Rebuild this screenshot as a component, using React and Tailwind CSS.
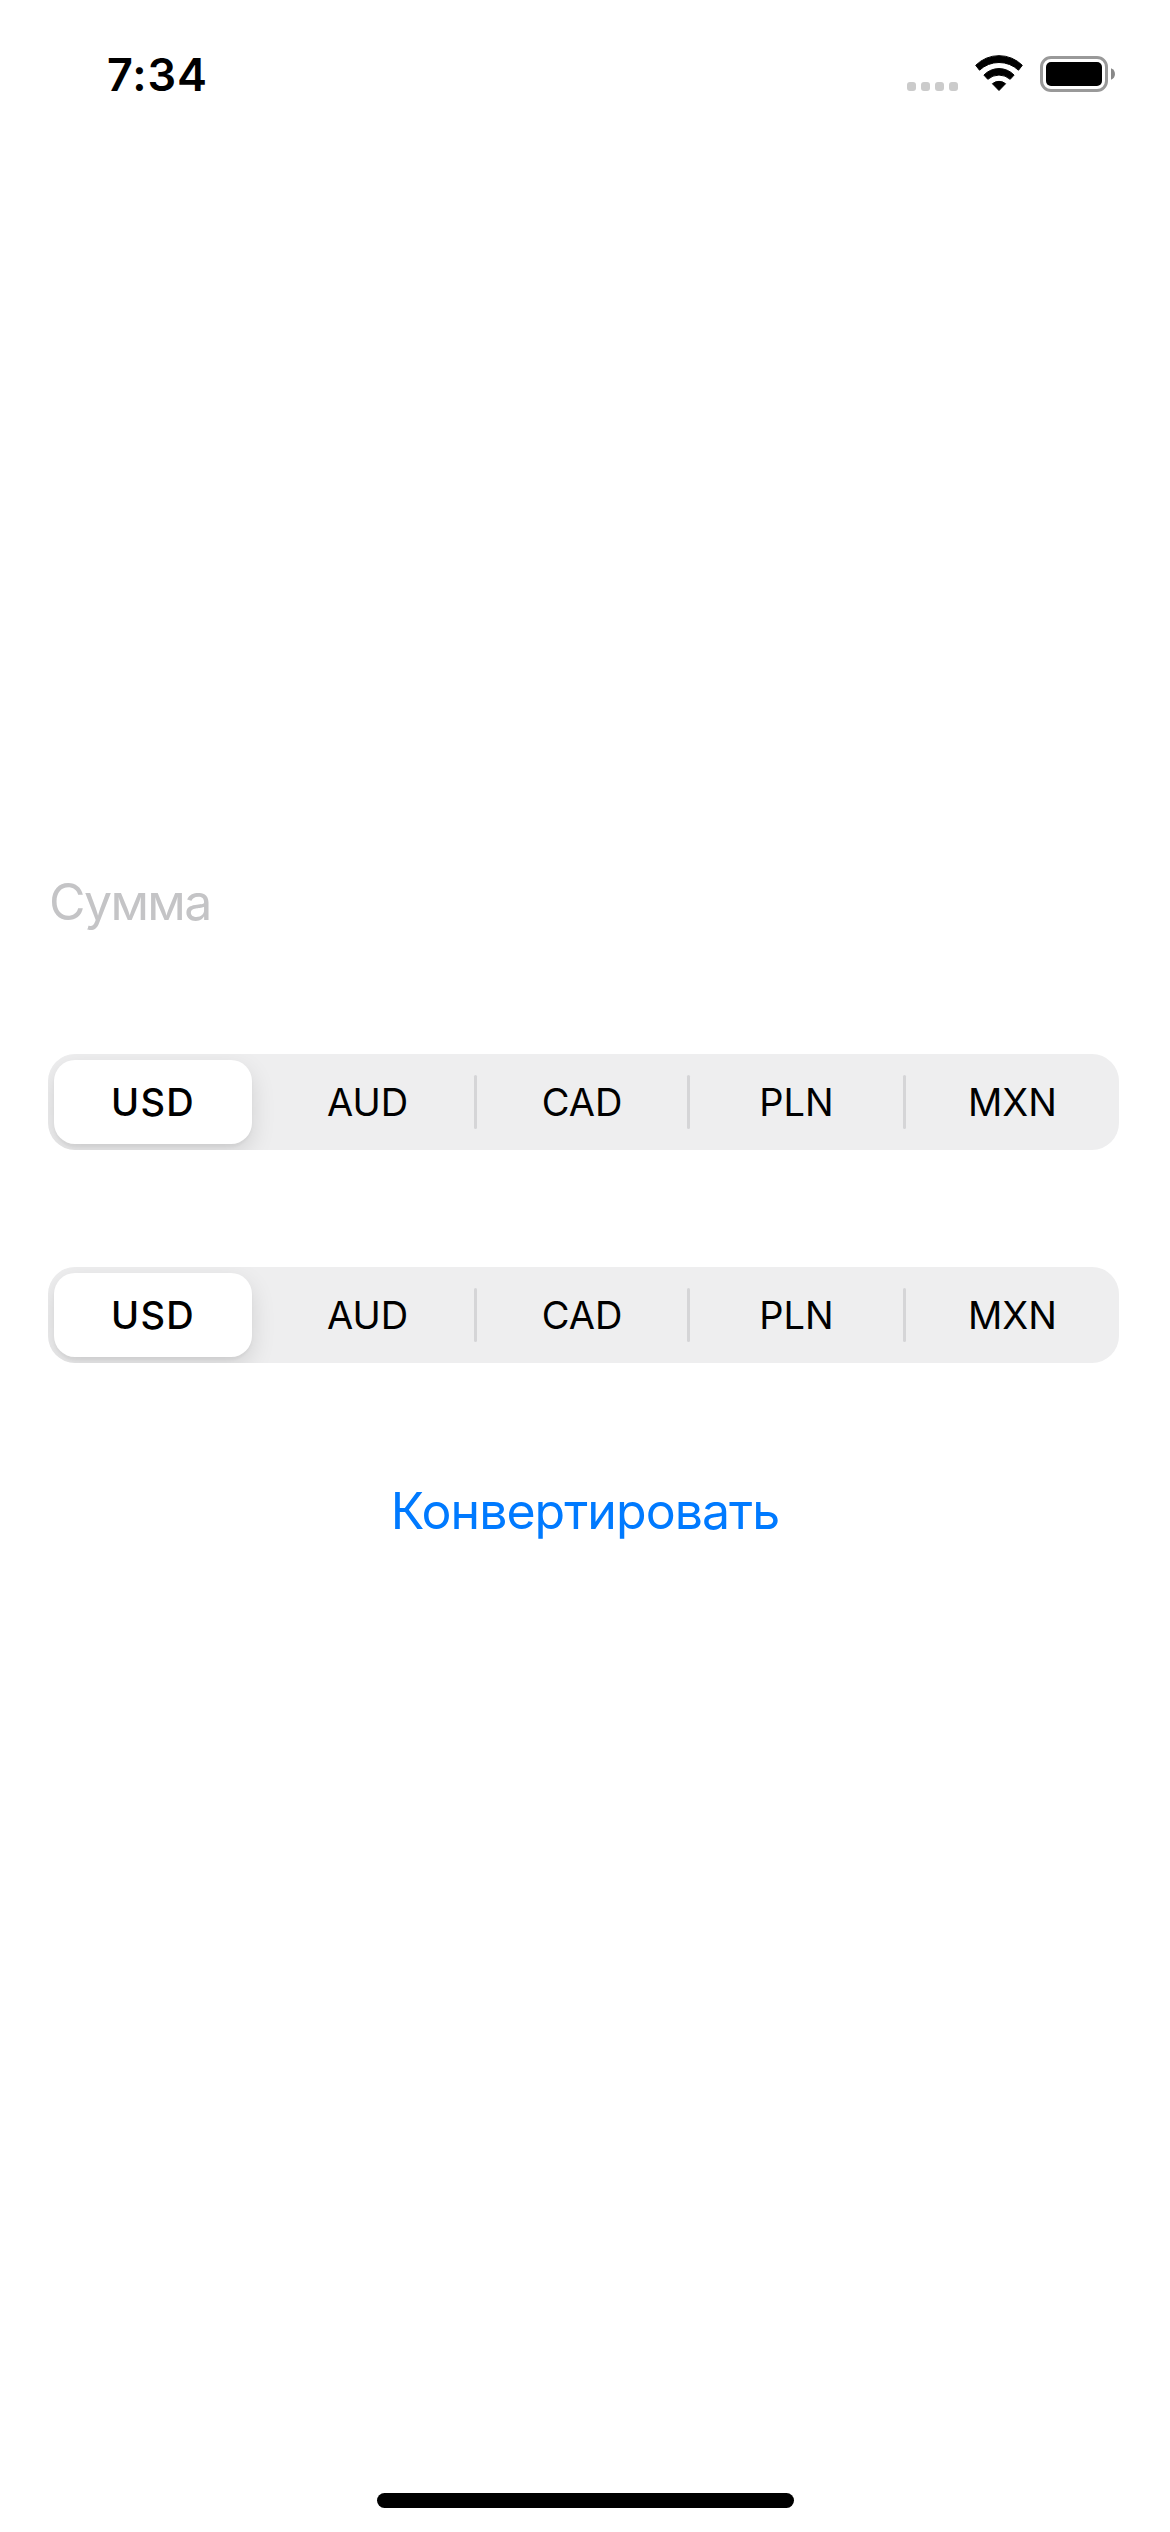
const currencies = ["USD", "AUD", "CAD", "PLN", "MXN"];

function SegmentedControl({ className }) {
  return (
    <div
      role="tablist"
      className={`grid h-24 w-[1071px] grid-cols-[210px_216px_213px_216px_216px] overflow-hidden rounded-[27px] bg-[#eeeeef] text-[38px] ${className}`}
    >
      {currencies.map((code, i) => (
        <button
          key={code}
          role="tab"
          aria-selected={i === 0}
          className={
            i === 0
              ? "my-1.5 ml-1.5 mr-1.5 rounded-[21px] bg-white font-medium tracking-[1.3px] shadow-[0_9px_24px_rgba(0,0,0,0.12),0_3px_3px_rgba(0,0,0,0.04)]"
              : "relative flex items-center justify-center pl-[3px]"
          }
        >
          {i > 1 && (
            <span className="absolute left-0 top-[21px] h-[54px] w-[3px] rounded-full bg-[#d5d5d7]" />
          )}
          {code}
        </button>
      ))}
    </div>
  );
}

function StatusBar() {
  return (
    <header className="flex h-[147px] items-center justify-between pl-[107px] pr-[55px]">
      <time className="pt-px text-[45px] font-semibold leading-none tracking-[0.9px]">7:34</time>
      <div className="flex items-end">
        <div className="flex gap-[5px] pb-px">
          <span className="size-[9px] rounded-[3px] bg-[#cbcbcb]" />
          <span className="size-[9px] rounded-[3px] bg-[#cbcbcb]" />
          <span className="size-[9px] rounded-[3px] bg-[#cbcbcb]" />
          <span className="size-[9px] rounded-[3px] bg-[#cbcbcb]" />
        </div>
        <svg className="mb-px ml-[17px] h-9 w-12" viewBox="0 0 48 36">
          <g stroke="#000" strokeWidth="1" strokeLinejoin="round">
            <path d="M.7 10.3A33 33 0 0 1 47.3 10.3L43.5 15.2A28.5 28.5 0 0 0 4.5 15.2Z" />
            <path d="M8.9 20.1A20.7 20.7 0 0 1 39.1 20.1L35.2 24.3A16.9 16.9 0 0 0 12.8 24.3Z" />
            <path d="M17.4 28.7A10.5 10.5 0 0 1 30.6 28.7L24 35.5Z" />
          </g>
        </svg>
        <svg className="ml-[17px] h-9 w-[75px]" viewBox="0 0 75 36">
          <rect x="1.5" y="1.5" width="65" height="33" rx="9.5" fill="none" stroke="#999" strokeWidth="3" />
          <rect x="6" y="6" width="56" height="24" rx="5" />
          <path d="M71 12.3C76.3 14.2 76.3 21.8 71 23.7Z" fill="#888" />
        </svg>
      </div>
    </header>
  );
}

export default function App() {
  return (
    <main className="flex h-[2532px] w-[1170px] flex-col bg-white font-['Inter',sans-serif] text-black">
      <StatusBar />
      <input
        placeholder="Сумма"
        className="ml-12 mt-[719px] h-[72px] w-[1071px] pl-px text-[50px] tracking-[-1.6px] outline-none placeholder:text-[#c4c4c6]"
      />
      <SegmentedControl className="ml-12 mt-[116px]" />
      <SegmentedControl className="ml-12 mt-[117px]" />
      <button className="mt-[111px] h-[72px] self-center text-[50px] tracking-[-0.96px] text-[#007aff]">
        Конвертировать
      </button>
      <div className="mb-6 mt-auto h-[15px] w-[417px] self-center rounded-full bg-black" />
    </main>
  );
}
